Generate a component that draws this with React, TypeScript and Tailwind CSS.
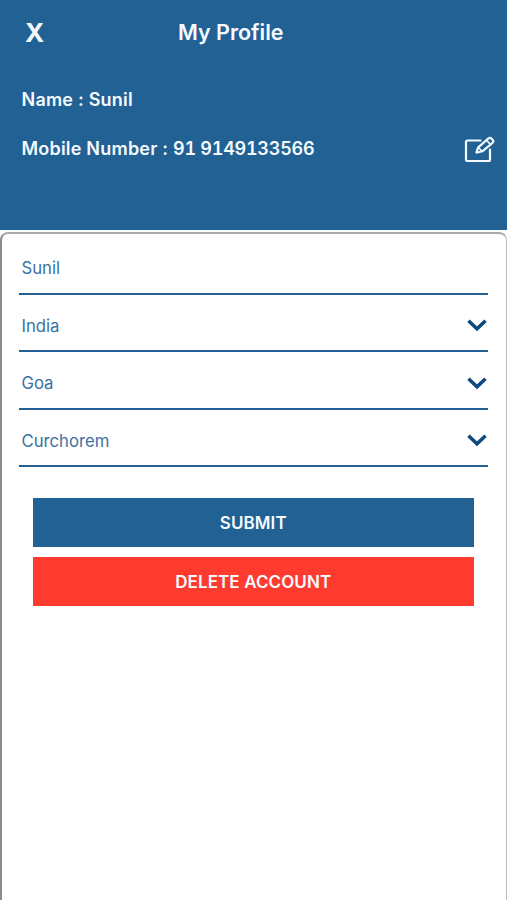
const font = { page: "font-['Inter','Liberation_Sans',sans-serif]" };

function EditIcon() {
  return (
    <svg className="mt-[2px] block" width="32" height="28" viewBox="0 0 32 28" fill="none" stroke="#f4faff" strokeWidth="2.200" strokeLinecap="round" strokeLinejoin="round">
      <path d="M16.500 4.500H3.500Q2 4.500 2 6V23.500Q2 25 3.500 25H24.500Q26 25 26 23.500V13.500" />
      <path d="M12.500 16.200L14.200 11.300L24.200 2.700Q26 1.200 27.600 2.700L28.700 3.900Q30.100 5.500 28.400 7L18.300 15.300L13.300 16.500Q12.300 16.800 12.500 16.200Z" />
      <path d="M22.500 4.300L26.700 8.600M14.500 11.500L18 15.200" strokeWidth="1.600" />
    </svg>
  );
}

function Chevron() {
  return (
    <svg className="block" width="20" height="13" viewBox="0 0 20 13" fill="none" stroke="#0d4a80" strokeWidth="3.600">
      <path d="M1.500 1.700L10 9.700L18.500 1.700" />
    </svg>
  );
}

function Field({ value, select, height }: { value: string; select?: boolean; height: string }) {
  return (
    <div className={`flex flex-col ${height}`}>
      <div className={`flex flex-1 items-center justify-between pl-[2.5px] pr-[1.5px] ${select ? "pt-[7px]" : "pt-[10px]"}`}>
        <span className="text-[16.7px] leading-6 text-[#3b71a3]">{value}</span>
        {select && <Chevron />}
      </div>
      <div className="h-[2px] shrink-0 bg-[#215f94]" />
    </div>
  );
}

export default function App() {
  return (
    <div className={`flex h-[900px] w-[507px] flex-col overflow-hidden bg-white [font-feature-settings:'calt'_0] ${font.page}`}>
      <header className="h-[230px] shrink-0 bg-[#226194] text-[#f4faff]">
        <div className="flex h-16 items-center pl-[25px]">
          <button className="w-[153px] pt-px text-left text-[26px] font-bold leading-8">X</button>
          <h1 className="text-[21.5px] font-semibold leading-8">My Profile</h1>
        </div>
        <div className="pl-[21.5px] pr-[11px] pt-6 text-[18px] font-semibold leading-6 tracking-[0.21px]">
          <p>Name : Sunil</p>
          <div className="mt-[23px] flex h-7 items-center justify-between">
            <p>
              Mobile Number : <span className="tabular-nums tracking-[-0.25px]">91 9149133566</span>
            </p>
            <EditIcon />
          </div>
        </div>
      </header>
      <main className="mt-[2px] flex-1 rounded-t-lg border-l-2 border-r border-t-2 border-l-[#8c8c8c] border-r-[#bcbcbc] border-t-[#a9a9a9] pl-[17px] pr-[18px]">
        <Field value="Sunil" height="h-[60.5px]" />
        <Field value="India" select height="h-[57.5px]" />
        <Field value="Goa" select height="h-[57.5px]" />
        <Field value="Curchorem" select height="h-[57.5px]" />
        <div className="mt-[31px] flex flex-col gap-[10px] pl-[14px] pr-[14.5px] text-[17px] font-semibold tracking-[0.1px] text-[#f4faff]">
          <button className="h-[49px] bg-[#226194] pt-[2px]">SUBMIT</button>
          <button className="h-[49px] bg-[#ff3b30] pt-[2px]">DELETE ACCOUNT</button>
        </div>
      </main>
    </div>
  );
}
